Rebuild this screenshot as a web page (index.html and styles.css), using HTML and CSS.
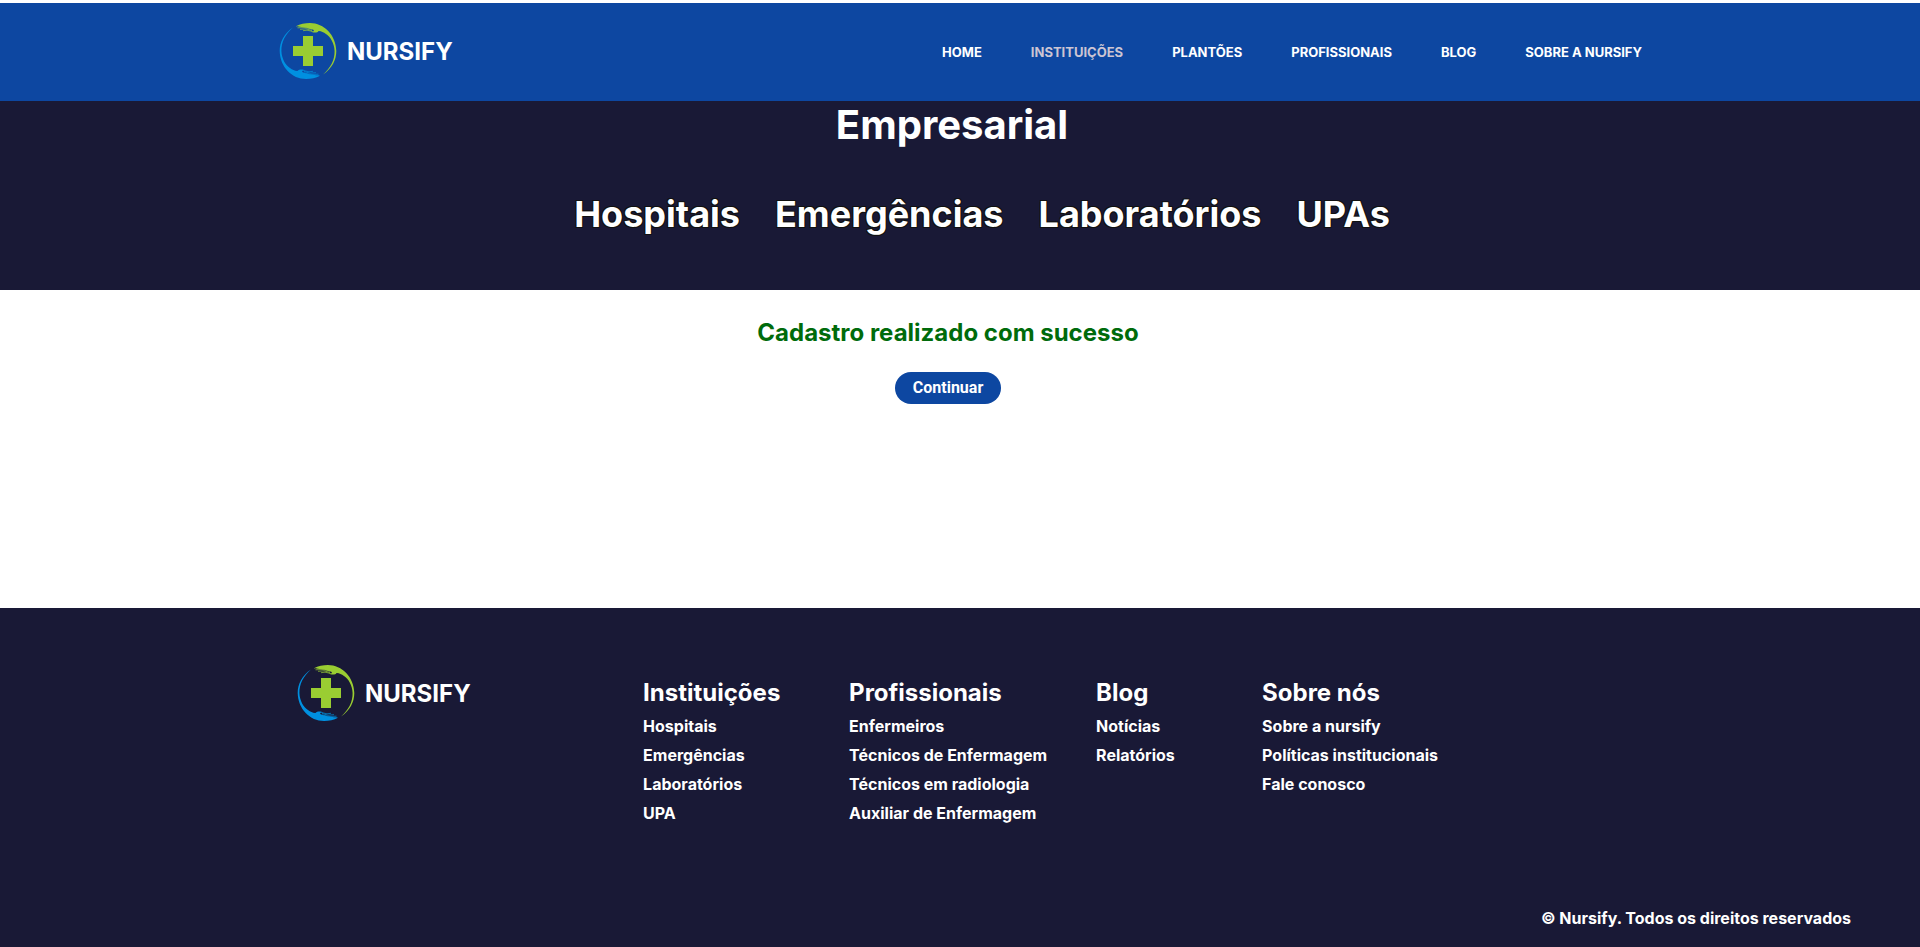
FILE: index.html
```html
<!DOCTYPE html>
<html lang="pt-BR">
<head>
<meta charset="utf-8">
<meta name="viewport" content="width=device-width, initial-scale=1">
<title>Nursify</title>
<link rel="stylesheet" href="styles.css">
</head>
<body>
<svg class="sprite" aria-hidden="true">
  <symbol id="logo" viewBox="0 0 60 60">
    <g id="hand">
      <path d="M18 5.2C22 3 27 2 32 2C46 2 58 14 58.300 30C58.300 39 54 47.500 45 53.500C52.500 47 56.800 39 56.600 30C56.300 22 52.500 16 48 13C45.500 11.300 43 9.800 40.500 10C40 11.500 37 12 34.500 11.300L33 10.500C36 10.500 37 9.500 34.500 8.500C32 7.500 29 7 26 6.200C23 5.500 20 6.200 18 5.200Z"/>
      <path class="fingers" d="M19.500 6.800L27 6.500L34 8M22 8.300L28 7.800L34 9.500M25 9.700L29 9.200L34 10.300"/>
    </g>
    <use class="hand-low" href="#hand" transform="rotate(180 30 30)"/>
    <path d="M25 15H35V25H45V35H35V45H25V35H15V25H25Z"/>
  </symbol>
</svg>

<header class="header">
  <div class="container header-row">
    <a class="brand" href="#"><svg class="brand-icon" aria-hidden="true"><use href="#logo"/></svg>NURSIFY</a>
    <nav class="nav" aria-label="Principal">
      <a href="#">HOME</a>
      <a class="current" href="#" aria-current="page">INSTITUIÇÕES</a>
      <a href="#">PLANTÕES</a>
      <a href="#">PROFISSIONAIS</a>
      <a href="#">BLOG</a>
      <a href="#">SOBRE A NURSIFY</a>
    </nav>
  </div>
</header>

<section class="hero">
  <h1>Empresarial</h1>
  <ul class="categories">
    <li>Hospitais</li>
    <li>Emergências</li>
    <li>Laboratórios</li>
    <li>UPAs</li>
  </ul>
</section>

<main class="message">
  <h2>Cadastro realizado com sucesso</h2>
  <button type="button">Continuar</button>
</main>

<footer class="footer">
  <div class="container footer-row">
    <a class="brand" href="#"><svg class="brand-icon" aria-hidden="true"><use href="#logo"/></svg>NURSIFY</a>
    <div class="columns">
      <section>
        <h3>Instituições</h3>
        <ul>
          <li><a href="#">Hospitais</a></li>
          <li><a href="#">Emergências</a></li>
          <li><a href="#">Laboratórios</a></li>
          <li><a href="#">UPA</a></li>
        </ul>
      </section>
      <section>
        <h3>Profissionais</h3>
        <ul>
          <li><a href="#">Enfermeiros</a></li>
          <li><a href="#">Técnicos de Enfermagem</a></li>
          <li><a href="#">Técnicos em radiologia</a></li>
          <li><a href="#">Auxiliar de Enfermagem</a></li>
        </ul>
      </section>
      <section>
        <h3>Blog</h3>
        <ul>
          <li><a href="#">Notícias</a></li>
          <li><a href="#">Relatórios</a></li>
        </ul>
      </section>
      <section>
        <h3>Sobre nós</h3>
        <ul>
          <li><a href="#">Sobre a nursify</a></li>
          <li><a href="#">Políticas institucionais</a></li>
          <li><a href="#">Fale conosco</a></li>
        </ul>
      </section>
    </div>
  </div>
  <p class="copyright">© Nursify. Todos os direitos reservados</p>
</footer>
</body>
</html>
```
FILE: styles.css
```css
* {
  box-sizing: border-box;
  margin: 0;
  padding: 0;
}

body {
  display: flex;
  flex-direction: column;
  min-height: 100vh;
  padding-top: 3px;
  background: #fff;
  color: #fff;
  font-family: Inter, sans-serif;
  font-size: 16px;
  font-weight: 700;
}

a {
  color: inherit;
  text-decoration: none;
}

ul {
  list-style: none;
}

.sprite {
  position: absolute;
  width: 0;
  height: 0;
}

.container {
  width: 100%;
  max-width: 1364px;
  margin: 0 auto;
}

.brand {
  display: flex;
  align-items: center;
  gap: 9px;
  font-size: 24px;
}

.brand-icon {
  width: 60px;
  height: 60px;
  color: #9acd32;
  fill: currentColor;
}

.fingers {
  fill: none;
  stroke: currentColor;
  stroke-width: 0.7;
}

.hand-low {
  color: #0090e0;
  fill: currentColor;
}

.header {
  padding: 18px 0 20px;
  background: #0d47a1;
}

.header-row {
  display: flex;
  align-items: center;
  justify-content: space-between;
}

.nav {
  display: flex;
  gap: 49px;
  padding-top: 2px;
  font-size: 13px;
}

.nav .current {
  color: #ccc5d3;
}

.hero {
  display: flex;
  flex-direction: column;
  align-items: center;
  gap: 40px;
  padding-bottom: 51px;
  background: #191936;
}

.hero h1 {
  padding-right: 16px;
  font-size: 40px;
  line-height: 48px;
}

.categories {
  display: flex;
  gap: 35px;
  padding-left: 44px;
  font-size: 36px;
  line-height: 50px;
  text-shadow: -1px -1px 0 #111, 1px -1px 0 #111, -1px 1px 0 #111, 1px 1px 0 #111;
}

.message {
  display: flex;
  flex: 1;
  flex-direction: column;
  align-items: center;
  gap: 24px;
  padding: 28px 24px 0 0;
}

.message h2 {
  color: #006b0b;
  font-size: 24px;
  line-height: 30px;
}

.message button {
  padding: 0 18px;
  border: 0;
  border-radius: 16px;
  background: #0d47a1;
  color: #fff;
  font: 700 16px/32px Roboto, sans-serif;
}

.footer {
  padding: 55px 0 18px;
  background: #191936;
}

.footer-row {
  display: flex;
  align-items: flex-start;
  justify-content: space-between;
  padding: 0 204px 0 18px;
}

.columns {
  display: grid;
  grid-template-columns: 206px 247px 166px auto;
  padding-top: 15px;
}

.columns h3 {
  font-size: 24px;
  line-height: 30px;
}

.columns ul {
  padding-top: 4px;
}

.columns li {
  line-height: 29px;
}

.copyright {
  padding: 79px 69px 0 0;
  line-height: 22px;
  text-align: right;
}
```
